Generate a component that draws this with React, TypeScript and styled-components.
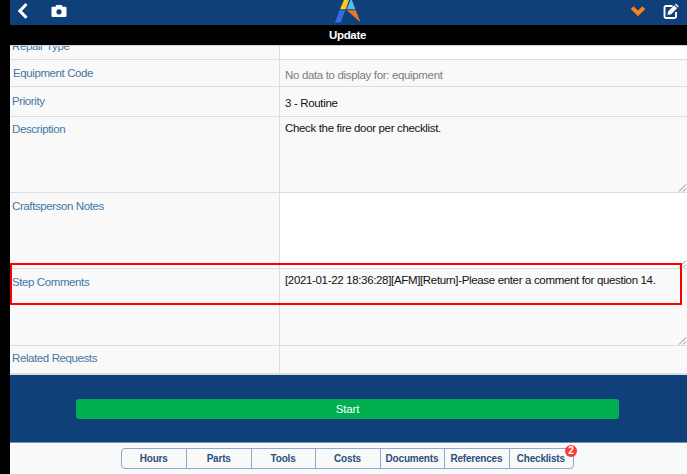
import React from "react";
import styled, { createGlobalStyle } from "styled-components";

const GlobalStyle = createGlobalStyle`
  * { box-sizing: border-box; }
  body { margin: 0; background: #000; overflow: hidden; font-family: "Liberation Sans", Arial, sans-serif; }
`;

const Screen = styled.div`
  position: relative;
  width: 687px;
  height: 474px;
  padding-left: 10px;
  display: flex;
  flex-direction: column;
  overflow: hidden;
  background: #000;
`;

const TopBar = styled.header`
  height: 25px;
  flex: none;
  display: grid;
  grid-template-columns: 1fr 28px 1fr;
  background: #10407a;
  svg { display: block; }
`;

const BarGroup = styled.div<{ $end?: boolean }>`
  display: flex;
  justify-content: ${(p) => (p.$end ? "flex-end" : "flex-start")};
  padding: ${(p) => (p.$end ? "0 8px 0 0" : "0 0 0 7px")};
  gap: ${(p) => (p.$end ? "17px" : "22px")};
`;

const TitleBar = styled.div`
  height: 20px;
  flex: none;
  padding-right: 2px;
  color: #fff;
  text-align: center;
  font-size: 11.5px;
  font-weight: 700;
  line-height: 21px;
  letter-spacing: -0.3px;
`;

const Form = styled.main`
  height: 330px;
  flex: none;
  border-top: 1px solid #d5d5d5;
  background: #dddee1;
  overflow: hidden;
`;

const Row = styled.div<{ $h: number }>`
  display: grid;
  grid-template-columns: 270px 1fr;
  height: ${(p) => p.$h}px;
  border-bottom: 1px solid #dddee1;
  background: #f9f9f9;
`;

const Label = styled.div<{ $top: number; $left?: number }>`
  padding: ${(p) => p.$top}px 0 0 ${(p) => p.$left ?? 2}px;
  border-right: 1px solid #dddee1;
  color: #4477a3;
  font-size: 11.5px;
  line-height: 14px;
  letter-spacing: -0.4px;
  white-space: nowrap;
`;

const ScrolledText = styled.span`
  display: block;
  margin-top: -7px;
`;

const Value = styled.div<{ $top?: number; $muted?: boolean; $white?: boolean }>`
  position: relative;
  padding: ${(p) => p.$top ?? 0}px 0 0 5px;
  background: ${(p) => (p.$white ? "#fff" : "#f9f9f9")};
  color: ${(p) => (p.$muted ? "#7c7c7c" : "#111")};
  font-size: 11.5px;
  line-height: 14px;
  letter-spacing: -0.34px;
  white-space: nowrap;
`;

const Grip = styled.svg`
  position: absolute;
  right: 0;
  bottom: 0;
`;

const Highlight = styled.div`
  position: absolute;
  left: 10px;
  top: 263px;
  width: 672px;
  height: 42px;
  border: 2px solid #f00;
`;

const ActionBar = styled.section`
  height: 68px;
  flex: none;
  padding: 24px 68px 0 66px;
  background: #10407a;
  border-bottom: 1px solid #7890b0;
`;

const StartButton = styled.button`
  display: block;
  width: 100%;
  height: 20px;
  padding: 0;
  border: 0;
  border-radius: 3px;
  background: #00b050;
  color: #fff;
  font: 11.5px/18px "Liberation Sans", Arial, sans-serif;
  letter-spacing: -0.2px;
`;

const Footer = styled.footer`
  flex: 1;
  padding: 5px 0 0 111px;
  background: #f8fafa;
`;

const Tabs = styled.nav`
  display: grid;
  grid-template-columns: repeat(7, 1fr);
  width: 453px;
  height: 21px;
  border: 1px solid #90a7cb;
  border-radius: 4px;
`;

const Tab = styled.div`
  position: relative;
  padding-right: 1px;
  color: #2d4e7e;
  font-size: 10px;
  font-weight: 700;
  line-height: 20px;
  letter-spacing: -0.2px;
  text-align: center;
  white-space: nowrap;
  & + & { border-left: 1px solid #90a7cb; }
`;

const Badge = styled.span`
  position: absolute;
  top: -4px;
  right: -4px;
  width: 12px;
  height: 12px;
  border-radius: 50%;
  background: #fb3b38;
  color: #fff;
  font-size: 10px;
  line-height: 12px;
  letter-spacing: 0;
`;

const ResizeGrip = () => (
  <Grip width="9" height="9" viewBox="0 0 9 9">
    <path d="M1 8.5 8 1.5M5 8.5 8 5.5" stroke="#888" fill="none" />
  </Grip>
);

const TAB_NAMES = ["Hours", "Parts", "Tools", "Costs", "Documents", "References"];

export default function App() {
  return (
    <>
      <GlobalStyle />
      <Screen>
        <TopBar>
          <BarGroup>
            <svg width="12" height="25" viewBox="0 0 12 25">
              <path d="M9.5 4 2.800 10.900l6.700 6.900" fill="none" stroke="#fff" strokeWidth="3" />
            </svg>
            <svg width="16" height="25" viewBox="0 0 16 25">
              <path
                fill="#fff"
                d="M1.500 6.800h3L5.400 5h5.200l.9 1.800h3a1 1 0 0 1 1 1V16a1 1 0 0 1-1 1h-13a1 1 0 0 1-1-1V7.800a1 1 0 0 1 1-1Z"
              />
              <circle cx="8" cy="11.800" r="2.600" fill="#10407a" />
            </svg>
          </BarGroup>
          <svg width="28" height="25" viewBox="0 0 28 25">
            <path d="M9 0h5L10.800 9.300H5Z" fill="#ffc914" />
            <path d="M15.500 0h1.300l3.700 9.300h-8.800Z" fill="#55bfed" />
            <path d="M4.500 10.300h5.800L5.800 22.500H0Z" fill="#386be0" />
            <path d="M11.800 10.300h8.900l4.800 12Z" fill="#ee762b" />
          </svg>
          <BarGroup $end>
            <svg width="16" height="25" viewBox="0 0 16 25">
              <path d="m2.200 7.600 5.800 5.800 5.800-5.800" fill="none" stroke="#f9811c" strokeWidth="4" />
            </svg>
            <svg width="16" height="25" viewBox="0 0 16 25">
              <path d="M9.500 6H3a1.500 1.500 0 0 0-1.500 1.500v9A1.500 1.500 0 0 0 3 18h8.500a1.500 1.500 0 0 0 1.500-1.500V12" fill="none" stroke="#fff" strokeWidth="1.900" />
              <path d="m4.500 15 .7-3.700 6-6 2.900 2.900-6 6ZM12 4.500l.9-.9 2.900 2.900-.9.900Z" fill="#fff" />
            </svg>
          </BarGroup>
        </TopBar>
        <TitleBar>Update</TitleBar>
        <Form>
          <Row $h={14}>
            <Label $top={0}><ScrolledText>Repair Type</ScrolledText></Label>
            <Value $white />
          </Row>
          <Row $h={27}>
            <Label $top={6} $left={3}>Equipment Code</Label>
            <Value $top={8} $muted>No data to display for: equipment</Value>
          </Row>
          <Row $h={30}>
            <Label $top={7}>Priority</Label>
            <Value $top={9}>3 - Routine</Value>
          </Row>
          <Row $h={76}>
            <Label $top={5}>Description</Label>
            <Value $top={4}>Check the fire door per checklist.<ResizeGrip /></Value>
          </Row>
          <Row $h={76}>
            <Label $top={6}>Craftsperson Notes</Label>
            <Value $white><ResizeGrip /></Value>
          </Row>
          <Row $h={77}>
            <Label $top={6}>Step Comments</Label>
            <Value $top={4}>
              [2021-01-22 18:36:28][AFM][Return]-Please enter a comment for question 14.
              <ResizeGrip />
            </Value>
          </Row>
          <Row $h={28}>
            <Label $top={5}>Related Requests</Label>
            <Value />
          </Row>
        </Form>
        <ActionBar><StartButton>Start</StartButton></ActionBar>
        <Footer>
          <Tabs>
            {TAB_NAMES.map((name) => <Tab key={name}>{name}</Tab>)}
            <Tab>Checklists<Badge>2</Badge></Tab>
          </Tabs>
        </Footer>
        <Highlight />
      </Screen>
    </>
  );
}
